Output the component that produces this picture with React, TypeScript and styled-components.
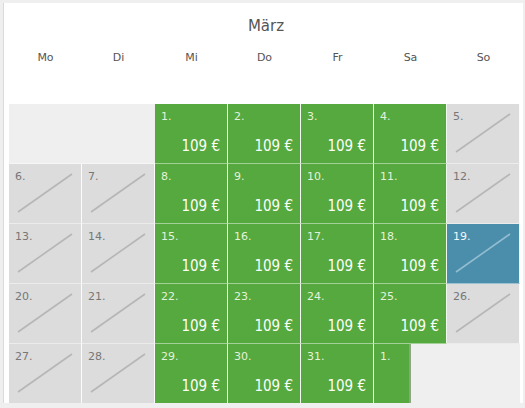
import React from "react";
import styled, { createGlobalStyle, css } from "styled-components";

const Global = createGlobalStyle`
  html, body { margin: 0; padding: 0; background: #efefef; }
  body { font-family: "DejaVu Sans", Verdana, sans-serif; }
`;

const Panel = styled.div`
  margin: 3px 2px 0 3px;
  border-left: 1px solid #dadada;
  background: #ffffff;
  padding: 3px 0 4px 5px;
  height: 400px;
  box-sizing: border-box;
`;

const Title = styled.div`
  height: 39px;
  line-height: 40px;
  text-align: center;
  font-size: 15px;
  color: #555;
`;

const Weekdays = styled.div`
  display: grid;
  grid-template-columns: repeat(7, 73px);
  height: 26px;
  line-height: 26px;
  margin-bottom: 33px;
`;

const Weekday = styled.div`
  text-align: center;
  font-size: 11px;
  color: #555;
`;

const Grid = styled.div`
  display: grid;
  grid-template-columns: repeat(7, 73px);
  grid-auto-rows: 60px;
  width: 511px;
  background: #efefef;
`;

type Kind = "green" | "gray" | "blue";

const Cell = styled.div<{ $kind: Kind; $narrow?: boolean }>`
  position: relative;
  box-sizing: border-box;
  border-right: 1px solid rgba(255, 255, 255, 0.92);
  border-bottom: 1px solid rgba(255, 255, 255, 0.45);
  padding: 6px 7px 8px 6px;
  display: flex;
  flex-direction: column;
  justify-content: space-between;
  ${(p) =>
    p.$kind === "green" &&
    css`
      background: #55a93e;
    `}
  ${(p) =>
    p.$kind === "gray" &&
    css`
      background: #dcdcdc;
    `}
  ${(p) =>
    p.$kind === "blue" &&
    css`
      background: #4b8eab;
    `}
  ${(p) =>
    p.$narrow &&
    css`
      width: 37px;
      border-right: 2px solid #8fa487;
    `}
`;

const Empty = styled.div<{ $span: number }>`
  grid-column: span ${(p) => p.$span};
  border-bottom: 1px solid rgba(255, 255, 255, 0.45);
`;

const DayNum = styled.div<{ $kind: Kind }>`
  font-size: 11px;
  line-height: 13px;
  color: ${(p) => (p.$kind === "gray" ? "#777" : p.$kind === "blue" ? "#f2f7fa" : "#e4f2dc")};
`;

const Price = styled.div`
  align-self: flex-end;
  font-family: "DejaVu Sans Condensed", "DejaVu Sans", Verdana, sans-serif;
  font-size: 15px;
  line-height: 18px;
  color: #fbfdf9;
`;

const Slash = styled.svg`
  position: absolute;
  left: 0;
  top: 0;
  pointer-events: none;
`;

type Item =
  | { t: "empty"; span: number }
  | { t: "day"; n: number; kind: Kind; narrow?: boolean };

const g = (n: number): Item => ({ t: "day", n, kind: "green" });
const x = (n: number): Item => ({ t: "day", n, kind: "gray" });

const items: Item[] = [
  { t: "empty", span: 2 },
  g(1), g(2), g(3), g(4), x(5),
  x(6), x(7), g(8), g(9), g(10), g(11), x(12),
  x(13), x(14), g(15), g(16), g(17), g(18), { t: "day", n: 19, kind: "blue" },
  x(20), x(21), g(22), g(23), g(24), g(25), x(26),
  x(27), x(28), g(29), g(30), g(31), { t: "day", n: 1, kind: "green", narrow: true },
];

const weekdays = ["Mo", "Di", "Mi", "Do", "Fr", "Sa", "So"];

export default function App() {
  return (
    <>
      <Global />
      <Panel>
        <Title>März</Title>
        <Weekdays>
          {weekdays.map((d) => (
            <Weekday key={d}>{d}</Weekday>
          ))}
        </Weekdays>
        <Grid>
          {items.map((it, i) =>
            it.t === "empty" ? (
              <Empty key={i} $span={it.span} />
            ) : (
              <Cell key={i} $kind={it.kind} $narrow={it.narrow}>
                {it.kind !== "green" && (
                  <Slash width="72" height="59">
                    <line
                      x1="9"
                      y1="48"
                      x2="63"
                      y2="10"
                      stroke={it.kind === "blue" ? "#93bdd0" : "#b6b6b6"}
                      strokeWidth="1.6"
                    />
                  </Slash>
                )}
                <DayNum $kind={it.kind}>{it.n}.</DayNum>
                {it.kind === "green" && !it.narrow && <Price>109 €</Price>}
              </Cell>
            )
          )}
        </Grid>
      </Panel>
    </>
  );
}
